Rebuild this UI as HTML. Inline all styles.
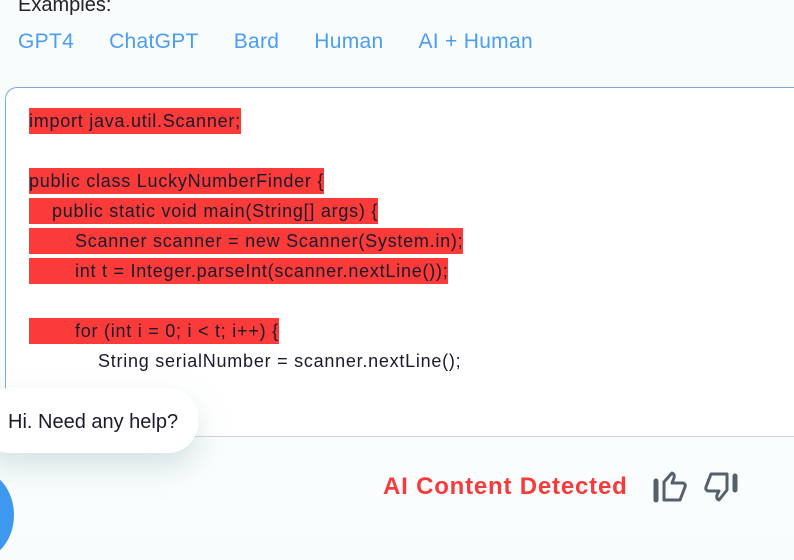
<!DOCTYPE html>
<html><head><style>
body{margin:0;width:794px;height:535px;overflow:hidden;background:#f9fcfd;font-family:"Liberation Sans",sans-serif;position:relative}
.ex{position:absolute;left:18px;top:-6px;font-size:20px;color:#222}
.links{position:absolute;left:18px;top:30px;font-size:21px;color:#4a9df0;letter-spacing:0.3px}
.links span{margin-right:35px}
.box{position:absolute;left:5px;top:87px;width:820px;height:349px;background:#fff;border:1px solid #7aa9e0;border-radius:12px 0 0 0;border-bottom:none}
.code{position:absolute;left:29px;top:106px;font-size:18px;letter-spacing:0.75px;color:#1a1a2a;line-height:30px}
.l{height:30px;white-space:pre}
.l span{background:#fb3a3a;padding:3px 0}
.div{position:absolute;left:0;top:436px;width:794px;height:1px;background:#cfd3d6}
.bottom{position:absolute;left:0;top:437px;width:794px;height:98px;background:#f9fdfd}
.bubble{position:absolute;left:-20px;top:388px;width:218px;height:65px;background:#fff;border-radius:30px;box-shadow:0 14px 30px rgba(150,180,180,.35);font-size:20px;color:#1a1a2a;line-height:68px;padding-left:28px;box-sizing:border-box}
.circ{position:absolute;left:-60px;top:470px;width:74px;height:90px;border-radius:50%;background:#3f98f0}
.ai{position:absolute;left:383px;top:473px;font-size:24px;font-weight:bold;color:#f73b3b;letter-spacing:0.8px}
</style></head><body>
<div class="ex">Examples:</div>
<div class="links"><span>GPT4</span><span>ChatGPT</span><span>Bard</span><span>Human</span><span>AI + Human</span></div>
<div class="box"></div>
<div class="code">
<div class="l"><span>import java.util.Scanner;</span></div>
<div class="l"></div>
<div class="l"><span>public class LuckyNumberFinder {</span></div>
<div class="l"><span>    public static void main(String[] args) {</span></div>
<div class="l"><span>        Scanner scanner = new Scanner(System.in);</span></div>
<div class="l"><span>        int t = Integer.parseInt(scanner.nextLine());</span></div>
<div class="l"></div>
<div class="l"><span>        for (int i = 0; i &lt; t; i++) {</span></div>
<div class="l">            String serialNumber = scanner.nextLine();</div>
</div>
<div class="bottom"></div>
<div class="div"></div>
<div class="ai">AI Content Detected</div>
<svg style="position:absolute;left:652px;top:470px" width="90" height="36" viewBox="0 0 90 36" fill="none" stroke="#56606a" stroke-width="3" stroke-linejoin="round" stroke-linecap="round">
<line x1="4" y1="11" x2="4" y2="30" stroke-width="5"/>
<path d="M12 30 V12 L20 3 Q23 4 22 8 L20 13 H31 Q34 14 33 17 L28 30 Z"/>
<line x1="83" y1="6" x2="83" y2="20" stroke-width="5"/>
<path d="M75 4 V20 L67 30 Q64 29 65 25 L67 21 H56 Q53 20 54 17 L59 4 Z"/>
</svg>
<div class="bubble">Hi. Need any help?</div>
<div class="circ"></div>
</body></html>
